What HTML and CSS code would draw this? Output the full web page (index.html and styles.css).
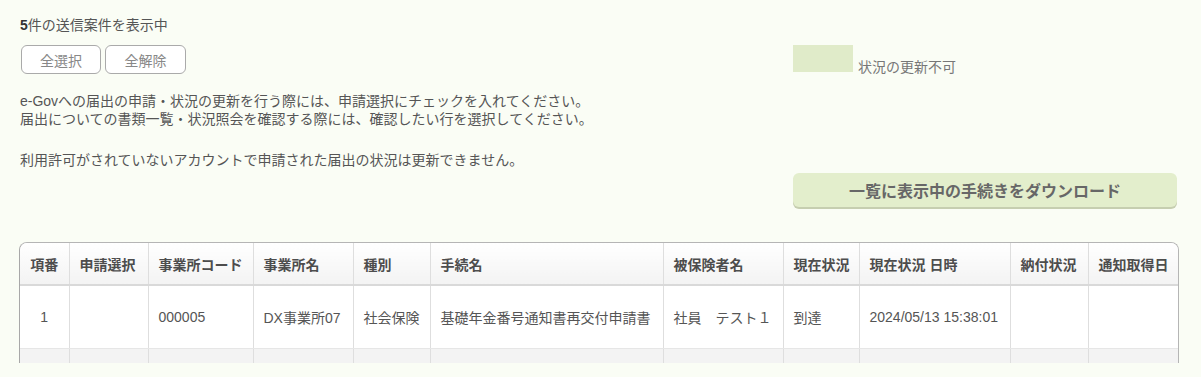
FILE: index.html
```html
<!DOCTYPE html>
<html lang="ja">
<head>
  <meta charset="UTF-8" />
  <meta name="viewport" content="width=device-width, initial-scale=1.0"/>
  <title>送信案件一覧</title>
  <link rel="stylesheet" href="styles.css">
</head>
<body>

  <div class="top">
    <div class="info">
      <p class="count"><b>5</b>件の送信案件を表示中</p>
      <div class="select-btns">
        <button class="btn-sm">全選択</button><button class="btn-sm">全解除</button>
      </div>
      <p class="note">e-Govへの届出の申請・状況の更新を行う際には、申請選択にチェックを入れてください。<br>届出についての書類一覧・状況照会を確認する際には、確認したい行を選択してください。</p>
      <p class="note note-2">利用許可がされていないアカウントで申請された届出の状況は更新できません。</p>
    </div>
    <div class="side">
      <div class="legend">
        <span class="swatch"></span><span class="legend-text">状況の更新不可</span>
      </div>
      <button class="btn-download">一覧に表示中の手続きをダウンロード</button>
    </div>
  </div>

  <div class="table-wrap">
    <table class="list">
      <colgroup>
        <col class="w-no"><col class="w-check"><col class="w-code"><col class="w-office">
        <col class="w-kind"><col class="w-proc"><col class="w-person"><col class="w-status">
        <col class="w-date"><col class="w-pay"><col class="w-notice">
      </colgroup>
      <thead>
        <tr>
          <th class="center">項番</th>
          <th>申請選択</th>
          <th>事業所コード</th>
          <th>事業所名</th>
          <th>種別</th>
          <th>手続名</th>
          <th>被保険者名</th>
          <th>現在状況</th>
          <th>現在状況 日時</th>
          <th>納付状況</th>
          <th>通知取得日</th>
        </tr>
      </thead>
      <tbody>
        <tr>
          <td class="center">1</td>
          <td></td>
          <td>000005</td>
          <td>DX事業所07</td>
          <td>社会保険</td>
          <td>基礎年金番号通知書再交付申請書</td>
          <td>社員　テスト１</td>
          <td>到達</td>
          <td>2024/05/13 15:38:01</td>
          <td></td>
          <td></td>
        </tr>
        <tr class="alt">
          <td></td><td></td><td></td><td></td><td></td><td></td>
          <td></td><td></td><td></td><td></td><td></td>
        </tr>
      </tbody>
    </table>
  </div>

</body>
</html>
```

FILE: styles.css
```css
body {
  font-family: "Liberation Sans", "Noto Sans CJK JP", sans-serif;
  font-size: 14px;
  color: #555;
  margin: 0;
  background: #fafdf5;
}

.top {
  display: flex;
  justify-content: space-between;
  padding: 16px 24px 0 20px;
}

.count {
  margin: 0;
  line-height: 18px;
}

.count b {
  color: #333;
}

.select-btns {
  margin-top: 11px;
  display: flex;
  gap: 4px;
  padding-left: 1px;
}

.btn-sm {
  font-family: inherit;
  font-size: 14px;
  color: #888;
  background: #fff;
  border: 1px solid #aaa;
  border-radius: 6px;
  height: 29px;
  width: 80px;
  padding: 0;
}

.btn-sm + .btn-sm {
  width: 81px;
}

.note {
  margin: 18px 0 0;
  line-height: 18px;
}

.note-2 {
  margin-top: 23px;
}

.side {
  width: 384px;
  display: flex;
  flex-direction: column;
}

.legend {
  margin-top: 29px;
  height: 27px;
  display: flex;
  align-items: flex-end;
}

.swatch {
  width: 60px;
  height: 27px;
  background: #e0ebc9;
  margin-right: 5px;
}

.legend-text {
  line-height: 14px;
  margin-bottom: -2px;
  color: #777;
}

.btn-download {
  margin-top: 101px;
  height: 34px;
  font-family: inherit;
  font-size: 16px;
  font-weight: bold;
  color: #676767;
  background: #e3eecc;
  border: none;
  border-radius: 6px;
  box-shadow: 0 2px 0 #c6ceb0;
  padding: 0;
}

.table-wrap {
  margin: 35px 22px 0 19px;
  height: 120px;
  overflow: hidden;
  border: 1px solid #b5b5b5;
  border-left-color: #a8a8a8;
  border-bottom: none;
  border-radius: 8px 8px 0 0;
  background: #fff;
}

.list {
  width: 100%;
  table-layout: fixed;
  border-collapse: collapse;
}

.w-no { width: 49px; }
.w-check { width: 79px; }
.w-code { width: 105px; }
.w-office { width: 100px; }
.w-kind { width: 77px; }
.w-proc { width: 233px; }
.w-person { width: 120px; }
.w-status { width: 76px; }
.w-date { width: 151px; }
.w-pay { width: 78px; }
.w-notice { width: 91px; }

.list th,
.list td {
  text-align: left;
  padding: 0 10px;
  border-left: 1px solid #dedede;
  white-space: nowrap;
}

.list th:first-child,
.list td:first-child {
  border-left: none;
}

.list th {
  height: 41px;
  font-weight: bold;
  color: #4d4d4d;
  background: linear-gradient(#ffffff, #f3f3f3);
  border-bottom: 2px solid #d9d9d9;
}

.list td {
  height: 62px;
  border-bottom: 1px solid #e6e6e6;
}

.list .center {
  text-align: center;
}

.list tr.alt td {
  background: #f3f3f3;
}
```
